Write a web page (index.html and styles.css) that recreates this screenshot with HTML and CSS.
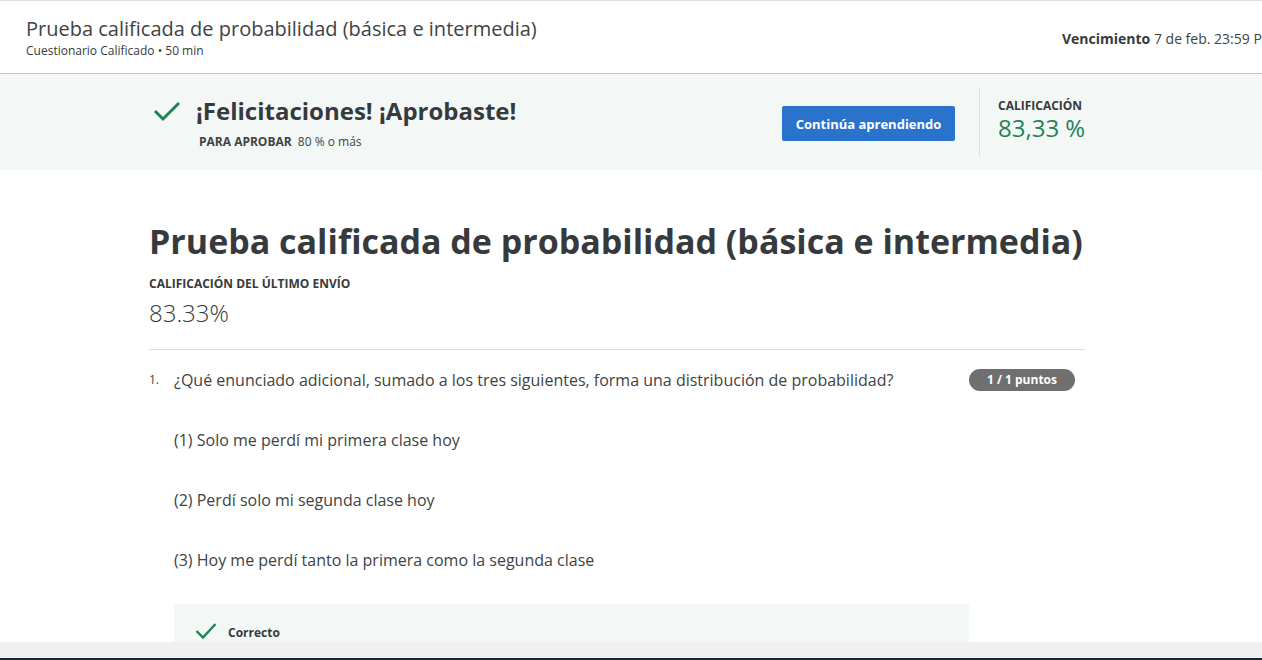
FILE: index.html
```html
<!DOCTYPE html>
<html lang="es">
<head>
<meta charset="utf-8">
<title>Prueba calificada</title>
<link rel="stylesheet" href="styles.css">
</head>
<body>
<header class="topbar">
  <div class="topbar-left">
    <div class="topbar-title">Prueba calificada de probabilidad (básica e intermedia)</div>
    <div class="topbar-sub">Cuestionario Calificado • 50 min</div>
  </div>
  <div class="topbar-right"><strong>Vencimiento</strong> 7 de feb. 23:59 PM</div>
</header>

<section class="banner">
  <div class="banner-main">
    <svg class="banner-check" width="28" height="22" viewBox="0 0 28 22"><path d="M2 11 L10 19 L26 3" fill="none" stroke="#1f8354" stroke-width="3"/></svg>
    <div>
      <div class="banner-title">¡Felicitaciones! ¡Aprobaste!</div>
      <div class="banner-pass"><strong>PARA APROBAR</strong> 80 % o más</div>
    </div>
  </div>
  <button class="btn">Continúa aprendiendo</button>
  <div class="banner-grade">
    <div class="grade-label">CALIFICACIÓN</div>
    <div class="grade-value">83,33 %</div>
  </div>
</section>

<main class="content">
  <h1 class="main-title">Prueba calificada de probabilidad (básica e intermedia)</h1>
  <div class="last-label">CALIFICACIÓN DEL ÚLTIMO ENVÍO</div>
  <div class="last-value">83.33%</div>
  <div class="question">
    <div class="q-num">1.</div>
    <div class="q-body">
      <div class="q-head">
        <div class="q-text">¿Qué enunciado adicional, sumado a los tres siguientes, forma una distribución de probabilidad?</div>
        <span class="badge">1 / 1 puntos</span>
      </div>
      <p class="q-item">(1) Solo me perdí mi primera clase hoy</p>
      <p class="q-item">(2) Perdí solo mi segunda clase hoy</p>
      <p class="q-item">(3) Hoy me perdí tanto la primera como la segunda clase</p>
      <div class="feedback">
        <svg width="22" height="18" viewBox="0 0 22 18"><path d="M1.5 9 L8 15.5 L20.5 2" fill="none" stroke="#1f8354" stroke-width="2.4"/></svg>
        <span>Correcto</span>
      </div>
    </div>
  </div>
</main>

<div class="scrollbar"></div>
</body>
</html>
```

FILE: styles.css
```css
* { box-sizing: border-box; }
html, body { margin: 0; padding: 0; }
body {
  font-family: "Open Sans", "Noto Sans", sans-serif;
  color: #373a3c;
  background: #fff;
  overflow: hidden;
  height: 660px;
  border-top: 1px solid #e0e0e0;
}
.topbar {
  height: 73px;
  display: flex;
  justify-content: space-between;
  align-items: center;
  padding-left: 26px;
  border-bottom: 1px solid #c5c5c5;
  white-space: nowrap;
  overflow: hidden;
}
.topbar-left { padding-bottom: 0; }
.topbar-title { font-size: 20px; line-height: 26px; color: #404345; }
.topbar-sub { font-size: 12px; line-height: 16px; color: #373a3c; margin-top: 1px; }
.topbar-right {
  font-size: 14px;
  color: #404345;
  width: 200px;
  overflow: hidden;
  flex-shrink: 0;
  padding-top: 2px;
}
.topbar-right strong { font-weight: 700; color: #373a3c; }
.banner {
  height: 96px;
  background: #f3f8f6;
  display: flex;
  align-items: center;
  padding-left: 153px;
}
.banner-main { display: flex; align-items: flex-start; width: 629px; }
.banner-check { margin-top: 5px; margin-right: 15px; }
.banner-title { font-size: 24px; font-weight: 700; line-height: 32px; color: #373a3c; }
.banner-pass { font-size: 12px; line-height: 16px; margin-top: 7px; margin-left: 3px; color: #404345; }
.banner-pass strong { margin-right: 3px; }
.btn {
  width: 173px;
  height: 35px;
  background: #2a73cc;
  color: #fff;
  border: none;
  border-radius: 2px;
  font-family: inherit;
  font-size: 13px;
  font-weight: 700;
  margin-top: 3px;
}
.banner-grade {
  margin-left: 24px;
  border-left: 1px solid #dedede;
  height: 68px;
  padding-left: 18px;
  padding-top: 10px;
}
.grade-label { font-size: 12px; font-weight: 700; color: #373a3c; line-height: 16px; margin-bottom: 1px; }
.grade-value { font-size: 24px; font-weight: 400; color: #1f8354; line-height: 26px; }
.content { width: 936px; margin-left: 149px; }
.main-title {
  margin: 49px 0 0;
  font-size: 34px;
  font-weight: 700;
  line-height: 44px;
  color: #373a3c;
  white-space: nowrap;
}
.last-label { font-size: 12px; font-weight: 700; margin-top: 13px; color: #373a3c; line-height: 16px; }
.last-value { font-size: 24px; font-weight: 300; line-height: 32px; color: #373a3c; margin-top: 5px; }
.question {
  border-top: 1px solid #dadada;
  margin-top: 20px;
  padding-top: 19px;
  display: flex;
}
.q-num { width: 25px; font-size: 12px; line-height: 22px; color: #404345; }
.q-body { flex: 1; }
.q-head { display: flex; justify-content: space-between; align-items: flex-start; }
.q-text { font-size: 16px; line-height: 22px; color: #404345; width: 790px; }
.badge {
  background: #6f6f6f;
  color: #fff;
  font-size: 12px;
  font-weight: 700;
  border-radius: 11px;
  height: 22px;
  line-height: 22px;
  width: 106px;
  text-align: center;
  margin-right: 10px;
}
.q-item { margin: 38px 0 0; font-size: 16px; line-height: 22px; color: #404345; }
.feedback {
  margin-top: 33px;
  width: 795px;
  height: 60px;
  background: #f3f8f6;
  display: flex;
  align-items: flex-start;
  padding: 18px 0 0 21px;
  gap: 11px;
  font-size: 12px;
  font-weight: 700;
  color: #373a3c;
}
.feedback span { margin-top: 2px; }
.scrollbar {
  position: fixed;
  left: 0;
  right: 0;
  bottom: 0;
  height: 18px;
  background: #f0f0f0;
  border-bottom: 2px solid #1f262b;
}
```
